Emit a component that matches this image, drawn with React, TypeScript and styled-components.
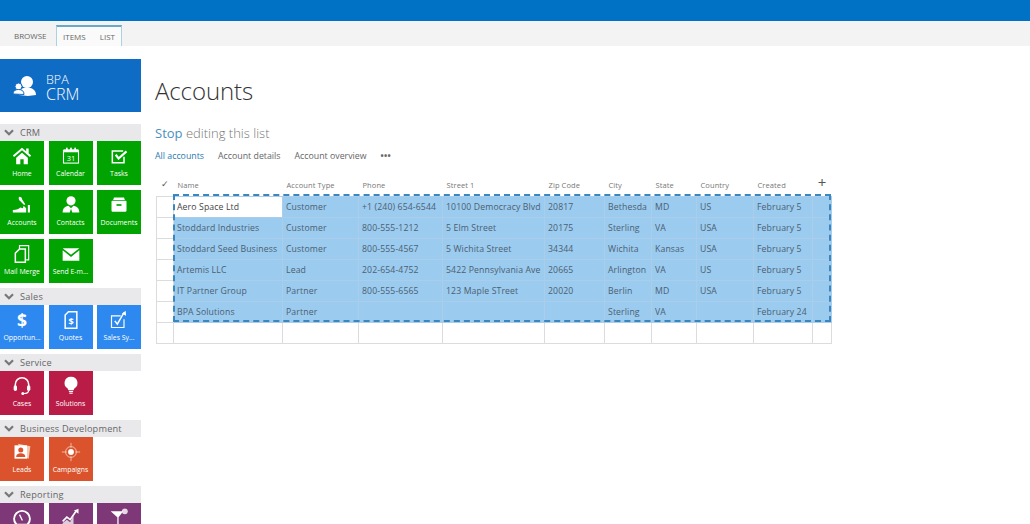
import React from 'react';
import styled, { createGlobalStyle } from 'styled-components';

const GlobalStyle = createGlobalStyle`
  html, body {
    margin: 0;
    height: 100%;
    overflow: hidden;
    background: #fff;
    font-family: "Open Sans", "Liberation Sans", sans-serif;
    color: #444;
  }
`;

const Page = styled.div`
  width: 1030px;
  height: 524px;
  overflow: hidden;
  display: flex;
  flex-direction: column;
`;

const TopBar = styled.div`
  height: 21px;
  flex: none;
  background: #0072c6;
`;

const Ribbon = styled.div`
  height: 25px;
  flex: none;
  display: flex;
  align-items: flex-end;
  padding-left: 14px;
  background: #f3f3f3;
  font-size: 8px;
  color: #666;
`;

const RibbonLink = styled.span`
  width: 33px;
  height: 21px;
  line-height: 22px;
`;

const ActiveTabs = styled.div`
  box-sizing: border-box;
  height: 21px;
  margin-left: 9px;
  padding: 0 6px;
  width: 66px;
  display: flex;
  justify-content: space-between;
  line-height: 20px;
  background: #fafafa;
  border-top: 2px solid #6ba8c4;
  border-left: 1px solid #a9d3e3;
  border-right: 1px solid #a9d3e3;
`;

const Body = styled.div`
  flex: 1;
  display: flex;
  min-height: 0;
`;

const Sidebar = styled.nav`
  width: 141px;
  flex: none;
  padding-top: 13px;
`;

const Brand = styled.div`
  height: 53px;
  display: flex;
  align-items: center;
  gap: 9px;
  padding-left: 13px;
  background: #0f6cc4;
  color: #fff;
  margin-bottom: 11.5px;
`;

const BrandText = styled.div`
  display: flex;
  flex-direction: column;
  font-weight: 300;
  margin-top: 3px;
`;

const BrandTop = styled.span`
  font-size: 12.5px;
  line-height: 13px;
`;

const BrandBottom = styled.span`
  font-size: 16px;
  line-height: 16px;
`;

const Section = styled.section`
  margin-bottom: 5px;
`;

const SectionHeader = styled.div`
  height: 17px;
  display: flex;
  align-items: center;
  gap: 6px;
  padding-left: 4px;
  background: #e9e9ec;
  font-size: 9.2px;
  letter-spacing: 0.2px;
  color: #666;
`;

const Tiles = styled.div`
  display: grid;
  grid-template-columns: repeat(3, 44px);
  justify-content: space-between;
  gap: 5px 4.5px;
`;

const Tile = styled.div<{ $color: string }>`
  height: 44px;
  display: flex;
  flex-direction: column;
  align-items: center;
  padding-top: 5px;
  box-sizing: border-box;
  background: ${(p) => p.$color};
  color: #fff;
`;

const TileIcon = styled.svg`
  width: 20px;
  height: 20px;
  flex: none;
`;

const TileLabel = styled.span`
  margin-top: 2px;
  font-size: 6.9px;
  line-height: 12px;
  white-space: nowrap;
`;

const Main = styled.main`
  flex: 1;
  padding: 28px 0 0 14px;
  min-width: 0;
`;

const Title = styled.h1`
  margin: 0;
  font-size: 24px;
  line-height: 34px;
  font-weight: 300;
  color: #333;
  letter-spacing: -0.1px;
`;

const StopLine = styled.div`
  margin-top: 15px;
  font-size: 13px;
  line-height: 20px;
  font-weight: 300;
  color: #777;
`;

const StopLink = styled.span`
  font-weight: 400;
  color: #4a8fbe;
`;

const Views = styled.div`
  margin-top: 6px;
  display: flex;
  align-items: center;
  gap: 14px;
  font-size: 8.8px;
  line-height: 14px;
  color: #666;
`;

const ViewLink = styled.span<{ $active?: boolean }>`
  color: ${(p) => (p.$active ? '#2a7ab0' : '#666')};
`;

const Dots = styled.span`
  font-weight: 700;
  font-size: 8.5px;
  letter-spacing: 0.2px;
`;

const TableWrap = styled.div`
  position: relative;
  width: 675px;
  margin-top: 8px;
  margin-left: 1px;
`;

const Grid = styled.table`
  table-layout: fixed;
  border-collapse: collapse;
  width: 675px;
`;

const HeadCell = styled.th`
  height: 25px;
  padding: 4px 0 0 4px;
  box-sizing: border-box;
  text-align: left;
  font-size: 7.5px;
  font-weight: 400;
  letter-spacing: 0.1px;
  color: #777;
  overflow: visible;
  white-space: nowrap;
`;

const IconHead = styled(HeadCell)`
  padding: 0;
  text-align: center;
  font-size: 9px;
  color: #555;
`;

const PlusHead = styled(IconHead)`
  font-size: 15px;
  font-weight: 400;
  padding-bottom: 2px;
  color: #555;
`;

const Cell = styled.td<{ $selected?: boolean; $current?: boolean }>`
  height: 21.15px;
  padding: 0 0 0 3px;
  box-sizing: border-box;
  border: 1px solid ${(p) => (p.$selected ? '#abcde9' : '#dcdcdc')};
  background: ${(p) => (p.$current ? '#fff' : p.$selected ? '#9bcbef' : '#fff')};
  font-size: 8.7px;
  letter-spacing: 0.12px;
  white-space: nowrap;
  overflow: hidden;
  color: ${(p) => (p.$current ? '#444' : '#4b6070')};
`;

const Marching = styled.div`
  position: absolute;
  left: 17px;
  top: 23px;
  width: 658px;
  height: 128px;
  box-sizing: border-box;
  border: 2px dashed #3a86bf;
  pointer-events: none;
`;

const ChevronIcon = () => (
  <svg width="10" height="7" viewBox="0 0 10 7">
    <path d="M1 1.200 5 5.200 9 1.200" fill="none" stroke="#777" strokeWidth="2.200" />
  </svg>
);

const BrandIcon = () => (
  <svg width="24" height="22" viewBox="0 0 24 22">
    <circle cx="14" cy="7" r="6" fill="#fff" />
    <path d="M6 20c0-5 3-7.500 8-7.500s9 2.500 9 7.500l-8 1z" fill="#fff" />
    <circle cx="5.500" cy="11.500" r="3.500" fill="#fff" stroke="#0f6cc4" />
    <path d="M0 19c0-3 2-4.500 5.500-4.500S11 16 11 19.500z" fill="#fff" stroke="#0f6cc4" />
  </svg>
);

const W = { fill: '#fff' };
const S = { fill: 'none', stroke: '#fff', strokeWidth: 1.8 };

const icons: Record<string, React.ReactNode> = {
  home: (
    <>
      <path d="M12 2 1 11.500l1.500 1.700L12 5.200l9.500 8 1.500-1.700z" {...W} />
      <rect x="17" y="3" width="3" height="6" {...W} />
      <path d="M5 14 12 8l7 6v8h-5v-6h-4v6H5z" {...W} />
    </>
  ),
  calendar: (
    <>
      <rect x="3" y="5.500" width="18" height="15" fill="none" stroke="#fff" strokeWidth="1.300" />
      <rect x="3" y="4" width="18" height="3.500" {...W} />
      <rect x="6" y="2" width="2" height="3" {...W} />
      <rect x="11" y="2" width="2" height="3" {...W} />
      <rect x="16" y="2" width="2" height="3" {...W} />
      <text x="12" y="18" textAnchor="middle" fontSize="9" fill="#fff" fontFamily="Open Sans, sans-serif">31</text>
    </>
  ),
  tasks: (
    <>
      <path d="M18 13v7H4V6h13" {...S} />
      <path d="M8 10.500 11.500 15 21 6.500" fill="none" stroke="#fff" strokeWidth="2.600" />
    </>
  ),
  accounts: (
    <>
      <path d="M1 21v-3c5 0 7-1 9-3l3 1 1-3 3 3v5z" {...W} />
      <rect x="19" y="12" width="2.500" height="9" {...W} />
      <path d="M9 2c2 0 3 1 3 3l4 6-1.500 1-5-5C8 6 7.500 2 9 2z" {...W} />
    </>
  ),
  contacts: (
    <>
      <circle cx="12" cy="7" r="5.500" {...W} />
      <path d="M2 21c0-5 3-7.500 7-8l3 3 3-3c4 .5 7 3 7 8h-8.500l-1.500-4.500L10.500 21z" {...W} />
    </>
  ),
  documents: (
    <>
      <path d="M6 3h12l1 3H5z" {...W} />
      <rect x="3" y="7" width="18" height="13" rx="1" {...W} />
      <rect x="9" y="11" width="6" height="2" fill="#00a300" />
    </>
  ),
  merge: (
    <>
      <path d="M9 6V2h11v17h-3" {...S} strokeWidth={1.4} />
      <path d="M9 6h7v16H4V11z" {...S} />
    </>
  ),
  email: (
    <>
      <path d="M2 5h20L12 13z" {...W} />
      <path d="M2 7.500V20h20V7.500L12 15.500z" {...W} />
    </>
  ),
  dollar: (
    <text x="12" y="20" textAnchor="middle" fontSize="21" fontWeight="700" fill="#fff" fontFamily="Open Sans, sans-serif">$</text>
  ),
  quotes: (
    <>
      <path d="M9 2h10v20H5V6z" {...S} />
      <text x="12" y="18" textAnchor="middle" fontSize="11" fontWeight="700" fill="#fff" fontFamily="Open Sans, sans-serif">$</text>
    </>
  ),
  sales: (
    <>
      <path d="M14 7H3v14h15V11" {...S} strokeWidth={1.4} />
      <path d="M7 13l3 4 8-14" fill="none" stroke="#fff" strokeWidth="1.800" />
      <path d="M15.500 4.500 20 1l.5 6z" {...W} />
    </>
  ),
  headset: (
    <>
      <path d="M4 13V10a8 8 0 0 1 16 0v3" fill="none" stroke="#fff" strokeWidth="1.800" />
      <rect x="2" y="11" width="4" height="7" rx="2" {...W} />
      <rect x="18" y="11" width="4" height="7" rx="2" {...W} />
      <path d="M20 17c0 3-3 4-6 4" fill="none" stroke="#fff" strokeWidth="1.400" />
      <circle cx="13" cy="21" r="1.800" {...W} />
    </>
  ),
  bulb: (
    <>
      <path d="M12 1a7.500 7.500 0 0 0-4 14l1 2h6l1-2a7.500 7.500 0 0 0-4-14z" {...W} />
      <rect x="9.500" y="18" width="5" height="1.300" {...W} />
      <rect x="10" y="20" width="4" height="1.300" {...W} />
    </>
  ),
  leads: (
    <>
      <path d="M7 2 22 5l-2 15-4-1" fill="#f6c9b4" />
      <rect x="3" y="4" width="15" height="16" fill="#fff" />
      <circle cx="10.500" cy="9.500" r="3" fill="#da532c" />
      <path d="M5 18c0-3 2-4.500 5.500-4.500S16 15 16 18z" fill="#da532c" />
    </>
  ),
  target: (
    <>
      <circle cx="12" cy="12" r="3.500" {...W} />
      <circle cx="12" cy="12" r="6.500" fill="none" stroke="#f7cdb9" strokeWidth="1" />
      <path d="M12 1v6M12 17v6M1 12h6M17 12h6" stroke="#f7cdb9" strokeWidth="1" />
    </>
  ),
  gauge: (
    <>
      <circle cx="12" cy="13" r="9.500" {...S} strokeWidth={2.200} />
      <path d="M4 19h16l-2 3H6z" {...W} />
      <path d="M9 8l3.500 7" stroke="#fff" strokeWidth="1.600" />
    </>
  ),
  chart: (
    <>
      <path d="M2 22v-4l5-4 4 3 4-8v13z" fill="#fff" opacity=".75" />
      <path d="M2 16l5-5 4 3 7-10" fill="none" stroke="#fff" strokeWidth="2" />
      <path d="M15.500 3 21 1v6z" {...W} />
    </>
  ),
  funnel: (
    <>
      <path d="M2 4h15l-5.500 7v8l3 2H7.500l2.500-2v-8z" {...W} />
      <circle cx="19" cy="4" r="3.500" fill="#fff" opacity=".8" />
    </>
  ),
};

type TileData = { label: string; icon: string };

const groups: { name: string; color: string; tiles: TileData[] }[] = [
  {
    name: 'CRM',
    color: '#00a300',
    tiles: [
      { label: 'Home', icon: 'home' },
      { label: 'Calendar', icon: 'calendar' },
      { label: 'Tasks', icon: 'tasks' },
      { label: 'Accounts', icon: 'accounts' },
      { label: 'Contacts', icon: 'contacts' },
      { label: 'Documents', icon: 'documents' },
      { label: 'Mail Merge', icon: 'merge' },
      { label: 'Send E-m...', icon: 'email' },
    ],
  },
  {
    name: 'Sales',
    color: '#2d89ef',
    tiles: [
      { label: 'Opportun...', icon: 'dollar' },
      { label: 'Quotes', icon: 'quotes' },
      { label: 'Sales Sy...', icon: 'sales' },
    ],
  },
  {
    name: 'Service',
    color: '#b91d47',
    tiles: [
      { label: 'Cases', icon: 'headset' },
      { label: 'Solutions', icon: 'bulb' },
    ],
  },
  {
    name: 'Business Development',
    color: '#da532c',
    tiles: [
      { label: 'Leads', icon: 'leads' },
      { label: 'Campaigns', icon: 'target' },
    ],
  },
  {
    name: 'Reporting',
    color: '#7e3878',
    tiles: [
      { label: '', icon: 'gauge' },
      { label: '', icon: 'chart' },
      { label: '', icon: 'funnel' },
    ],
  },
];

const columns: { title: string; width: number }[] = [
  { title: 'Name', width: 109 },
  { title: 'Account Type', width: 76 },
  { title: 'Phone', width: 84 },
  { title: 'Street 1', width: 102 },
  { title: 'Zip Code', width: 60 },
  { title: 'City', width: 47 },
  { title: 'State', width: 45 },
  { title: 'Country', width: 57 },
  { title: 'Created', width: 59 },
];

const rows: string[][] = [
  ['Aero Space Ltd', 'Customer', '+1 (240) 654-6544', '10100 Democracy Blvd', '20817', 'Bethesda', 'MD', 'US', 'February 5'],
  ['Stoddard Industries', 'Customer', '800-555-1212', '5 Elm Street', '20175', 'Sterling', 'VA', 'USA', 'February 5'],
  ['Stoddard Seed Business', 'Customer', '800-555-4567', '5 Wichita Street', '34344', 'Wichita', 'Kansas', 'USA', 'February 5'],
  ['Artemis LLC', 'Lead', '202-654-4752', '5422 Pennsylvania Ave', '20665', 'Arlington', 'VA', 'US', 'February 5'],
  ['IT Partner Group', 'Partner', '800-555-6565', '123 Maple STreet', '20020', 'Berlin', 'MD', 'USA', 'February 5'],
  ['BPA Solutions', 'Partner', '', '', '', 'Sterling', 'VA', '', 'February 24'],
];

export default function App() {
  return (
    <Page>
      <GlobalStyle />
      <TopBar />
      <Ribbon>
        <RibbonLink>BROWSE</RibbonLink>
        <ActiveTabs>
          <span>ITEMS</span>
          <span>LIST</span>
        </ActiveTabs>
      </Ribbon>
      <Body>
        <Sidebar>
          <Brand>
            <BrandIcon />
            <BrandText>
              <BrandTop>BPA</BrandTop>
              <BrandBottom>CRM</BrandBottom>
            </BrandText>
          </Brand>
          {groups.map((g) => (
            <Section key={g.name}>
              <SectionHeader>
                <ChevronIcon />
                {g.name}
              </SectionHeader>
              <Tiles>
                {g.tiles.map((t) => (
                  <Tile key={t.icon} $color={g.color}>
                    <TileIcon viewBox="0 0 24 24">{icons[t.icon]}</TileIcon>
                    {t.label && <TileLabel>{t.label}</TileLabel>}
                  </Tile>
                ))}
              </Tiles>
            </Section>
          ))}
        </Sidebar>
        <Main>
          <Title>Accounts</Title>
          <StopLine>
            <StopLink>Stop</StopLink> editing this list
          </StopLine>
          <Views>
            <ViewLink $active>All accounts</ViewLink>
            <ViewLink>Account details</ViewLink>
            <ViewLink>Account overview</ViewLink>
            <Dots>•••</Dots>
          </Views>
          <TableWrap>
            <Grid>
              <colgroup>
                <col style={{ width: 17 }} />
                {columns.map((c) => (
                  <col key={c.title} style={{ width: c.width }} />
                ))}
                <col style={{ width: 19 }} />
              </colgroup>
              <thead>
                <tr>
                  <IconHead>✓</IconHead>
                  {columns.map((c) => (
                    <HeadCell key={c.title}>{c.title}</HeadCell>
                  ))}
                  <PlusHead>+</PlusHead>
                </tr>
              </thead>
              <tbody>
                {rows.map((row, r) => (
                  <tr key={row[0]}>
                    <Cell />
                    {row.map((v, c) => (
                      <Cell key={c} $selected $current={r === 0 && c === 0}>
                        {v}
                      </Cell>
                    ))}
                    <Cell $selected />
                  </tr>
                ))}
                <tr>
                  <Cell />
                  {columns.map((c) => (
                    <Cell key={c.title} />
                  ))}
                  <Cell />
                </tr>
              </tbody>
            </Grid>
            <Marching />
          </TableWrap>
        </Main>
      </Body>
    </Page>
  );
}
